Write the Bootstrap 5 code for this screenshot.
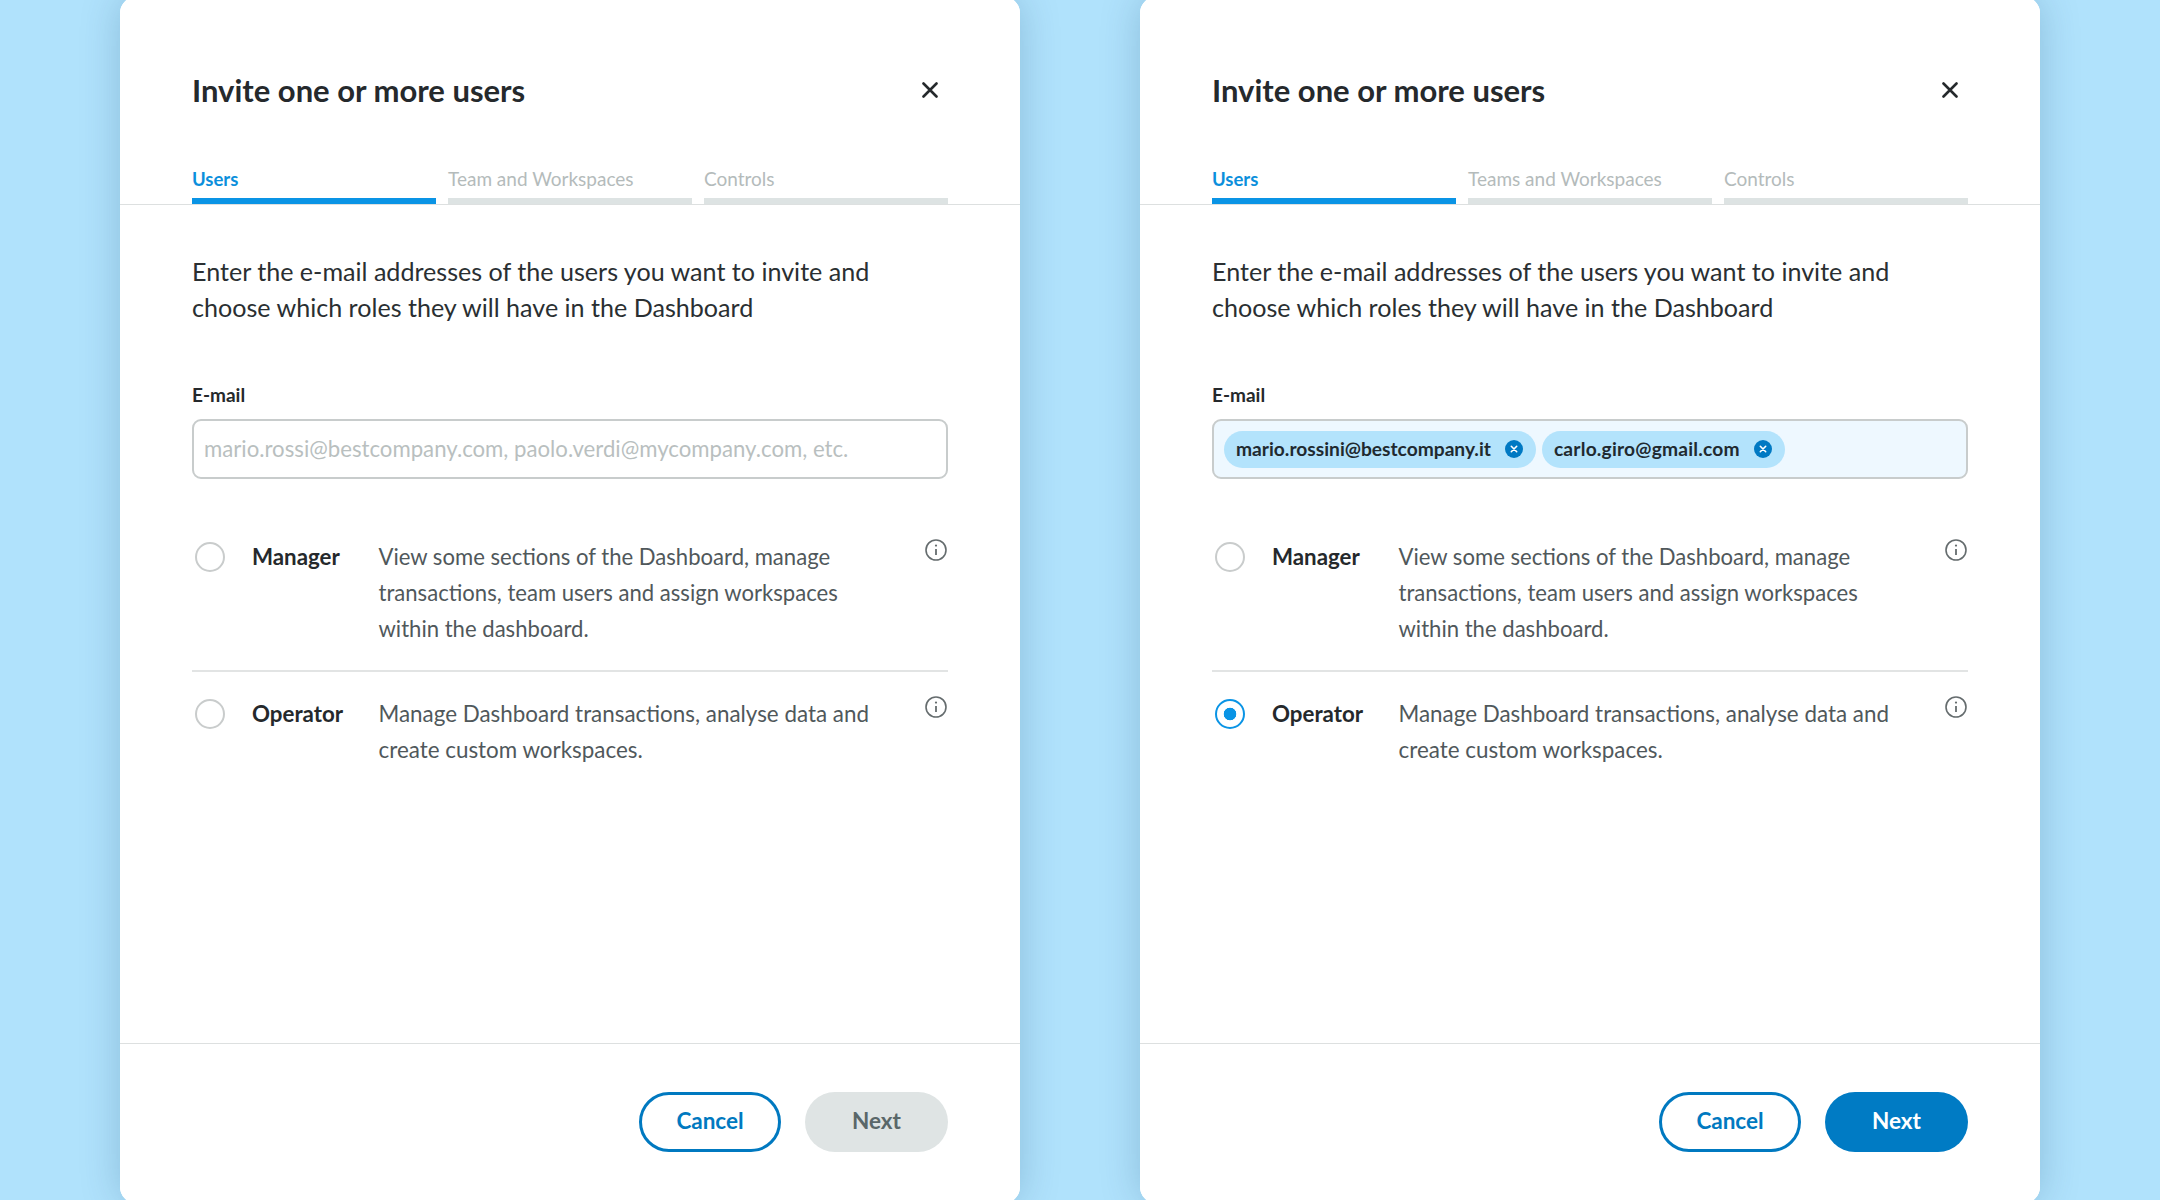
<!DOCTYPE html>
<html lang="en">
<head>
<meta charset="utf-8">
<title>Invite users</title>
<link rel="stylesheet" href="https://cdn.jsdelivr.net/npm/bootstrap@5.3.0/dist/css/bootstrap.min.css">
<style>
html,body{height:100%;}
body{background:#b0e2fc;overflow:hidden;font-family:"Lato","Liberation Sans",sans-serif;color:#25292c;}
.stage{height:1206px;margin-top:-3px;padding:0 120px;gap:120px;}
.sheet{width:900px;height:100%;border:0;border-radius:16px;background:#fff;box-shadow:0 0 40px rgba(0,60,100,.22);}
.sheet-head{background:#fff;border:0;border-bottom:1.5px solid #dde0e0;padding:74.5px 72px 0;border-radius:16px 16px 0 0!important;}
.sheet-title{font-size:31px;line-height:36px;font-weight:700;margin:0;color:#25292c;}
.x-btn{width:16px;height:16px;display:block;margin-right:10px;}
.tabs-row{margin-top:59.5px;gap:12px;}
.step{flex:1 1 0;font-size:19px;line-height:24px;color:#b4bbbb;padding-bottom:7px;border-bottom:6px solid #dde3e3;}
.step.on{color:#0b8fdc;font-weight:700;border-bottom-color:#0a94e5;font-size:18.5px;}
.sheet-body{padding:48px 72px 0;}
.intro{font-size:25.1px;line-height:36px;margin:0 0 58px;color:#2a2f32;}
.field-label{font-size:19px;line-height:24px;font-weight:700;margin:0 0 12px;color:#25292c;display:block;}
.mail-box{height:60px;border:2px solid #c8cccc;border-radius:9px;font-size:22.2px;padding:0 10px 2px;color:#25292c;font-family:inherit;}
.mail-box::placeholder{color:#b9bfbf;opacity:1;}
.mail-box:focus{border-color:#c8cccc;box-shadow:none;}
.mail-filled{background:#eef8ff;padding:0 10px;gap:6px;}
.chip{background:#b3e3fc;color:#1f2a30;height:37px;padding:0 13px 0 12px;font-size:19.2px;font-weight:700;gap:14px;}
.chip-wide{letter-spacing:.2px;}
.chip svg{width:18px;height:18px;display:block;}
.roles{margin-top:59.5px;}
.role{display:flex;align-items:flex-start;}
.role-first{padding-bottom:23px;border-bottom:2px solid #e2e4e4;}
.role-next{padding-top:24px;}
.pick.form-check-input{width:30px;height:30px;margin:3px 0 0 3px;flex:none;border:2px solid #c9cccc;background-color:#fff;}
.pick.form-check-input:checked{border-color:#0a94e5;background-color:#fff;background-image:radial-gradient(circle,#0a94e5 0,#0a94e5 6px,transparent 6.6px);}
.pick.form-check-input:focus{box-shadow:none;}
.role-name{width:126.5px;margin-left:27px;flex:none;font-size:22.3px;line-height:36px;font-weight:700;color:#25292c;}
.role-text{flex:1 1 auto;font-size:22.4px;line-height:36px;color:#50585b;margin:0;}
.role-first .role-text{font-size:22.1px;}
.info{width:22px;height:22px;flex:none;margin-top:0;margin-right:1px;display:block;}
.sheet-foot{background:#fff;border:0;border-top:1.5px solid #dde0e0;padding:47.5px 72px 0;height:160px;gap:24px;border-radius:0 0 16px 16px!important;}
.act{width:143px;height:60px;font-size:22.5px;font-weight:700;line-height:1;display:flex;align-items:center;justify-content:center;padding:0;border-radius:30px;}
.act-ghost{width:142px;border:3px solid #0079c0;color:#0079c0;background:#fff;}
.act-solid{border:0;background:#007bc4;color:#fff;}
.act-off{border:0;background:#dfe4e4;color:#5a6769;opacity:1;}
.act-off:disabled{background:#dfe4e4;color:#5a6769;opacity:1;}
</style>
</head>
<body>
<div class="stage d-flex">

  <section class="card sheet">
    <header class="card-header sheet-head">
      <div class="d-flex justify-content-between align-items-center">
        <h1 class="sheet-title">Invite one or more users</h1>
        <svg class="x-btn" viewBox="0 0 16 16" fill="none" stroke="#25292c" stroke-width="2.6" stroke-linecap="round"><path d="M1.5 1.5l13 13M14.5 1.5l-13 13"/></svg>
      </div>
      <div class="d-flex tabs-row">
        <div class="step on">Users</div>
        <div class="step">Team and Workspaces</div>
        <div class="step">Controls</div>
      </div>
    </header>
    <div class="card-body sheet-body">
      <p class="intro">Enter the e-mail addresses of the users you want to invite and<br>choose which roles they will have in the Dashboard</p>
      <label class="field-label" for="m1">E-mail</label>
      <input id="m1" class="form-control mail-box" type="text" placeholder="mario.rossi@bestcompany.com, paolo.verdi@mycompany.com, etc.">
      <div class="roles">
        <div class="role role-first">
          <input class="form-check-input pick" type="radio" name="r1">
          <div class="role-name">Manager</div>
          <p class="role-text">View some sections of the Dashboard, manage<br>transactions, team users and assign workspaces<br>within the dashboard.</p>
          <svg class="info" viewBox="0 0 22 22" fill="none" stroke="#656c6e" stroke-width="1.6"><circle cx="11" cy="11" r="10"/><path d="M11 10v6" stroke-width="1.8"/><circle cx="11" cy="6.6" r="1.1" fill="#656c6e" stroke="none"/></svg>
        </div>
        <div class="role role-next">
          <input class="form-check-input pick" type="radio" name="r1">
          <div class="role-name">Operator</div>
          <p class="role-text">Manage Dashboard transactions, analyse data and<br>create custom workspaces.</p>
          <svg class="info" viewBox="0 0 22 22" fill="none" stroke="#656c6e" stroke-width="1.6"><circle cx="11" cy="11" r="10"/><path d="M11 10v6" stroke-width="1.8"/><circle cx="11" cy="6.6" r="1.1" fill="#656c6e" stroke="none"/></svg>
        </div>
      </div>
    </div>
    <footer class="card-footer sheet-foot d-flex justify-content-end align-items-start">
      <button class="btn act act-ghost" type="button">Cancel</button>
      <button class="btn act act-off" type="button" disabled>Next</button>
    </footer>
  </section>

  <section class="card sheet">
    <header class="card-header sheet-head">
      <div class="d-flex justify-content-between align-items-center">
        <h1 class="sheet-title">Invite one or more users</h1>
        <svg class="x-btn" viewBox="0 0 16 16" fill="none" stroke="#25292c" stroke-width="2.6" stroke-linecap="round"><path d="M1.5 1.5l13 13M14.5 1.5l-13 13"/></svg>
      </div>
      <div class="d-flex tabs-row">
        <div class="step on">Users</div>
        <div class="step">Teams and Workspaces</div>
        <div class="step">Controls</div>
      </div>
    </header>
    <div class="card-body sheet-body">
      <p class="intro">Enter the e-mail addresses of the users you want to invite and<br>choose which roles they will have in the Dashboard</p>
      <div class="field-label">E-mail</div>
      <div class="form-control mail-box mail-filled d-flex align-items-center">
        <span class="badge rounded-pill chip d-inline-flex align-items-center">mario.rossini@bestcompany.it
          <svg viewBox="0 0 18 18"><circle cx="9" cy="9" r="9" fill="#0079c3"/><path d="M6.3 6.3l5.4 5.4M11.7 6.3l-5.4 5.4" stroke="#fff" stroke-width="1.6" stroke-linecap="round"/></svg></span>
        <span class="badge rounded-pill chip chip-wide d-inline-flex align-items-center">carlo.giro@gmail.com
          <svg viewBox="0 0 18 18"><circle cx="9" cy="9" r="9" fill="#0079c3"/><path d="M6.3 6.3l5.4 5.4M11.7 6.3l-5.4 5.4" stroke="#fff" stroke-width="1.6" stroke-linecap="round"/></svg></span>
      </div>
      <div class="roles">
        <div class="role role-first">
          <input class="form-check-input pick" type="radio" name="r2">
          <div class="role-name">Manager</div>
          <p class="role-text">View some sections of the Dashboard, manage<br>transactions, team users and assign workspaces<br>within the dashboard.</p>
          <svg class="info" viewBox="0 0 22 22" fill="none" stroke="#656c6e" stroke-width="1.6"><circle cx="11" cy="11" r="10"/><path d="M11 10v6" stroke-width="1.8"/><circle cx="11" cy="6.6" r="1.1" fill="#656c6e" stroke="none"/></svg>
        </div>
        <div class="role role-next">
          <input class="form-check-input pick" type="radio" name="r2" checked>
          <div class="role-name">Operator</div>
          <p class="role-text">Manage Dashboard transactions, analyse data and<br>create custom workspaces.</p>
          <svg class="info" viewBox="0 0 22 22" fill="none" stroke="#656c6e" stroke-width="1.6"><circle cx="11" cy="11" r="10"/><path d="M11 10v6" stroke-width="1.8"/><circle cx="11" cy="6.6" r="1.1" fill="#656c6e" stroke="none"/></svg>
        </div>
      </div>
    </div>
    <footer class="card-footer sheet-foot d-flex justify-content-end align-items-start">
      <button class="btn act act-ghost" type="button">Cancel</button>
      <button class="btn act act-solid" type="button">Next</button>
    </footer>
  </section>

</div>
<script src="https://cdn.jsdelivr.net/npm/bootstrap@5.3.0/dist/js/bootstrap.bundle.min.js"></script>
</body>
</html>
